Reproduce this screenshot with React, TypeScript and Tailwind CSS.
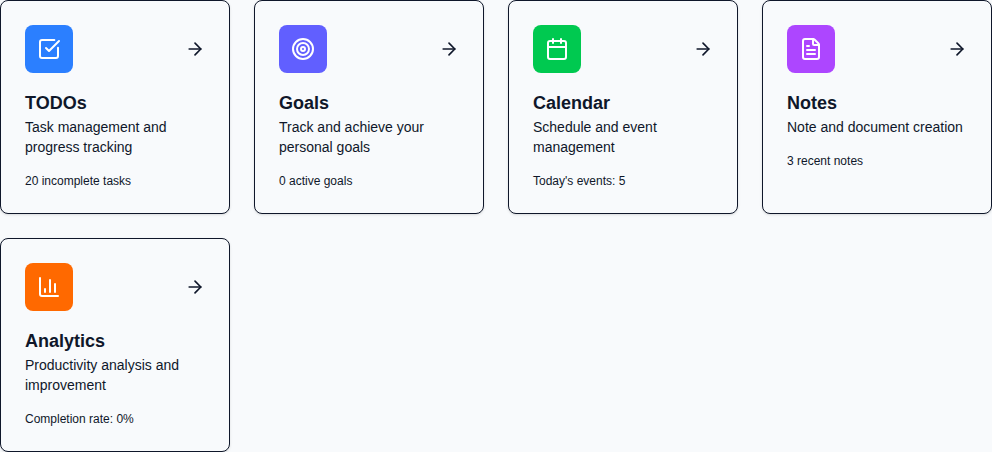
import React from "react";
import { ArrowRight, Calendar, ChartColumn, FileText, SquareCheckBig, Target } from "lucide-react";
import type { LucideIcon } from "lucide-react";

type Feature = {
  title: string;
  description: string;
  stat: string;
  color: string;
  icon: LucideIcon;
};

const features: Feature[] = [
  { title: "TODOs", description: "Task management and progress tracking", stat: "20 incomplete tasks", color: "bg-[#2b7fff]", icon: SquareCheckBig },
  { title: "Goals", description: "Track and achieve your personal goals", stat: "0 active goals", color: "bg-[#615fff]", icon: Target },
  { title: "Calendar", description: "Schedule and event management", stat: "Today's events: 5", color: "bg-[#00c950]", icon: Calendar },
  { title: "Notes", description: "Note and document creation", stat: "3 recent notes", color: "bg-[#ad46ff]", icon: FileText },
  { title: "Analytics", description: "Productivity analysis and improvement", stat: "Completion rate: 0%", color: "bg-[#ff6900]", icon: ChartColumn },
];

function FeatureCard({ title, description, stat, color, icon: Icon }: Feature) {
  return (
    <a className="block rounded-lg border border-[#0f172a] bg-[#f8fafc] p-6 shadow-sm">
      <div className="mb-4 flex items-center justify-between">
        <div className={`rounded-lg p-3 text-white ${color}`}>
          <Icon className="size-6" />
        </div>
        <ArrowRight className="size-5" />
      </div>
      <h3 className="text-lg font-semibold">{title}</h3>
      <p className="mb-4 text-sm">{description}</p>
      <div className="text-xs">{stat}</div>
    </a>
  );
}

export default function App() {
  return (
    <main className="min-h-screen bg-[#f8fafc] font-['Liberation_Sans',Arial,sans-serif] text-[#0f172a]">
      <div className="grid grid-cols-4 gap-6">
        {features.map((f) => (
          <FeatureCard key={f.title} {...f} />
        ))}
      </div>
    </main>
  );
}
